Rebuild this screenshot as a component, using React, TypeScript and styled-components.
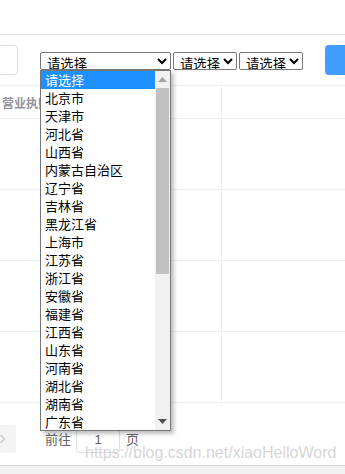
import React from 'react'
import styled, { createGlobalStyle } from 'styled-components'

const GlobalStyle = createGlobalStyle`
  html, body {
    margin: 0;
    padding: 0;
    background: #fff;
    font-family: "Noto Sans CJK SC", "Liberation Sans", sans-serif;
  }
  * {
    box-sizing: border-box;
  }
`

const Page = styled.div`
  position: relative;
  width: 345px;
  height: 474px;
  overflow: hidden;
  display: flex;
  flex-direction: column;
`

const TopBar = styled.div`
  height: 35px;
  flex-shrink: 0;
  border-bottom: 1px solid #e4e4e4;
`

const Toolbar = styled.div`
  height: 50px;
  flex-shrink: 0;
  display: flex;
  align-items: flex-start;
  padding-top: 10px;
`

const SearchInput = styled.div`
  width: 100px;
  height: 30px;
  margin-left: -82px;
  flex-shrink: 0;
  border: 1px solid #dcdfe6;
  border-radius: 4px;
`

const Selects = styled.div`
  display: flex;
  gap: 2px;
  margin-left: 22px;
  margin-top: 7px;
`

const NativeSelect = styled.select<{ $w: number }>`
  width: ${p => p.$w}px;
  height: 18px;
  padding: 0 0 0 2px;
  font-family: "Noto Sans CJK SC", sans-serif;
  font-size: 13.33px;
  color: #000;
  background: #fff;
  border: 1px solid #767676;
  border-radius: 2px;
`

const SearchButton = styled.div`
  width: 60px;
  height: 30px;
  margin-left: auto;
  margin-right: -40px;
  flex-shrink: 0;
  background: #409eff;
  border-radius: 4px;
`

const Table = styled.div`
  flex-shrink: 0;
  border-top: 1px solid #ebeef5;
`

const Row = styled.div<{ $h: number }>`
  display: grid;
  grid-template-columns: 222px 1fr;
  height: ${p => p.$h}px;
  border-bottom: 1px solid #ebeef5;
`

const Cell = styled.div`
  border-right: 1px solid #ebeef5;
  &:last-child {
    border-right: none;
  }
`

const HeadCell = styled(Cell)`
  padding: 8px 0 0 2px;
  font-size: 12px;
  font-weight: bold;
  color: #909399;
  white-space: nowrap;
  overflow: hidden;
`

const Pager = styled.div`
  display: flex;
  align-items: center;
  height: 28px;
  margin-top: 22px;
  flex-shrink: 0;
  font-size: 13px;
  color: #606266;
`

const NextBtn = styled.div`
  width: 30px;
  height: 28px;
  margin-left: -14px;
  display: flex;
  align-items: center;
  justify-content: flex-end;
  padding-right: 9px;
  background: #f4f4f5;
  border-radius: 2px;
`

const Jumper = styled.span`
  margin-left: 29px;
  line-height: 26px;
`

const PageInput = styled.div`
  width: 44px;
  height: 28px;
  margin: 0 6px 0 5px;
  border: 1px solid #dcdfe6;
  border-radius: 3px;
  display: flex;
  align-items: center;
  justify-content: center;
  font-family: "Liberation Sans", sans-serif;
  font-size: 13px;
`

const PageUnit = styled.span`
  line-height: 26px;
`

const Filler = styled.div`
  flex: 1;
`

const BottomBar = styled.div`
  height: 9px;
  flex-shrink: 0;
  border-top: 1px solid #d4d4d4;
  background: #f1f1f1;
`

const Dropdown = styled.div`
  position: absolute;
  left: 40px;
  top: 70px;
  width: 131px;
  height: 361px;
  display: flex;
  background: #fff;
  border: 1px solid #767676;
  box-shadow: 3px 3px 4px rgba(0, 0, 0, 0.25);
`

const Options = styled.div`
  flex: 1;
  overflow: hidden;
`

const Option = styled.div<{ $active?: boolean }>`
  height: 18px;
  line-height: 18px;
  padding-left: 4px;
  font-size: 13px;
  white-space: nowrap;
  color: ${p => (p.$active ? '#fff' : '#000')};
  background: ${p => (p.$active ? '#1e90ff' : 'transparent')};
`

const Scrollbar = styled.div`
  width: 15px;
  display: flex;
  flex-direction: column;
  align-items: center;
  background: #f1f1f1;
`

const Arrow = styled.div`
  height: 17px;
  width: 15px;
  display: flex;
  align-items: center;
  justify-content: center;
`

const Thumb = styled.div`
  width: 13px;
  height: 186px;
  background: #c1c1c1;
`

const Watermark = styled.div`
  position: absolute;
  left: 85px;
  top: 444px;
  font-family: "Liberation Sans", Arial, sans-serif;
  font-size: 16px;
  color: rgba(200, 200, 200, 0.75);
  white-space: nowrap;
  pointer-events: none;
`

const provinces = [
  '北京市', '天津市', '河北省', '山西省', '内蒙古自治区', '辽宁省', '吉林省',
  '黑龙江省', '上海市', '江苏省', '浙江省', '安徽省', '福建省', '江西省',
  '山东省', '河南省', '湖北省', '湖南省', '广东省',
]

const Tri: React.FC<{ up?: boolean }> = ({ up }) => (
  <svg width="9" height="5" viewBox="0 0 9 5">
    <path d={up ? 'M0 5 L4.5 0 L9 5 Z' : 'M0 0 L4.5 5 L9 0 Z'} fill={up ? '#a3a3a3' : '#505050'} />
  </svg>
)

const App: React.FC = () => {
  return (
    <Page>
      <GlobalStyle />
      <TopBar />
      <Toolbar>
        <SearchInput />
        <Selects>
          <NativeSelect $w={131}><option>请选择</option></NativeSelect>
          <NativeSelect $w={64}><option>请选择</option></NativeSelect>
          <NativeSelect $w={64}><option>请选择</option></NativeSelect>
        </Selects>
        <SearchButton />
      </Toolbar>

      <Table>
        <Row $h={33}>
          <HeadCell>营业执照</HeadCell>
          <Cell />
        </Row>
        {[0, 1, 2, 3].map(i => (
          <Row key={i} $h={71}>
            <Cell />
            <Cell />
          </Row>
        ))}
      </Table>

      <Pager>
        <NextBtn>
          <svg width="8" height="10" viewBox="0 0 8 10">
            <path d="M1.5 1 L5.5 5 L1.5 9" fill="none" stroke="#d0d3d9" strokeWidth="1.6" />
          </svg>
        </NextBtn>
        <Jumper>前往</Jumper>
        <PageInput>1</PageInput>
        <PageUnit>页</PageUnit>
      </Pager>
      <Filler />
      <BottomBar />

      <Dropdown>
        <Options>
          <Option $active>请选择</Option>
          {provinces.map(p => (
            <Option key={p}>{p}</Option>
          ))}
        </Options>
        <Scrollbar>
          <Arrow><Tri up /></Arrow>
          <Thumb />
          <Filler />
          <Arrow><Tri /></Arrow>
        </Scrollbar>
      </Dropdown>

      <Watermark>https://blog.csdn.net/xiaoHelloWord</Watermark>
    </Page>
  )
}

export default App
